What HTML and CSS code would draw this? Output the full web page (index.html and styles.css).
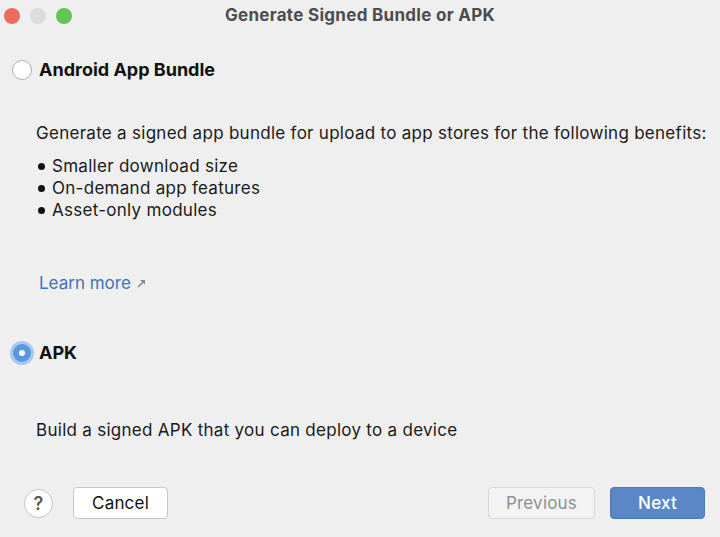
FILE: index.html
```html
<!DOCTYPE html>
<html>
<head>
<meta charset="utf-8">
<link rel="stylesheet" href="styles.css">
</head>
<body>
<div class="window">
  <div class="titlebar">
    <div class="lights">
      <span class="light red"></span>
      <span class="light gray"></span>
      <span class="light green"></span>
    </div>
    <div class="title">Generate Signed Bundle or APK</div>
  </div>
  <div class="content">
    <label class="option first">
      <span class="radio"></span>
      <span class="opt-label">Android App Bundle</span>
    </label>
    <p class="desc">Generate a signed app bundle for upload to app stores for the following benefits:</p>
    <ul class="benefits">
      <li>Smaller download size</li>
      <li>On-demand app features</li>
      <li>Asset-only modules</li>
    </ul>
    <a class="learn">Learn more <svg class="arrow" width="9" height="9" viewBox="0 0 9 9"><path d="M1 8 L6 3" stroke="#8a8a8a" stroke-width="1.6" fill="none"/><path d="M3.2 1 L8 1 L8 5.8 Z" fill="#8a8a8a"/></svg></a>
    <label class="option second">
      <span class="radio checked"></span>
      <span class="opt-label">APK</span>
    </label>
    <p class="desc apk">Build a signed APK that you can deploy to a device</p>
  </div>
  <div class="footer">
    <div class="left">
      <span class="help">?</span>
      <button class="btn">Cancel</button>
    </div>
    <div class="right">
      <button class="btn disabled">Previous</button>
      <button class="btn primary">Next</button>
    </div>
  </div>
</div>
</body>
</html>
```
FILE: styles.css
```css
html, body {
  margin: 0;
  padding: 0;
  background: #efefef;
}
.window {
  width: 720px;
  height: 537px;
  display: flex;
  flex-direction: column;
  font-family: Inter, "Liberation Sans", sans-serif;
  color: #1a1a1a;
  background: #efefef;
}
.titlebar {
  height: 31px;
  display: flex;
  align-items: center;
  position: relative;
}
.lights {
  display: flex;
  gap: 10px;
  padding-left: 4px;
  margin-top: 1px;
}
.light {
  width: 16px;
  height: 16px;
  border-radius: 50%;
  display: block;
}
.red { background: #ec6a5e; }
.gray { background: #dcdcdc; }
.green { background: #61c554; }
.title {
  position: absolute;
  left: 0;
  right: 0;
  text-align: center;
  font-size: 17px;
  letter-spacing: 0.3px;
  font-weight: 700;
  color: #4d4d4d;
  top: 5px;
}
.content {
  flex: 1;
  padding: 0 0 0 12px;
}
.option {
  display: flex;
  align-items: center;
  gap: 7px;
  line-height: 22px;
}
.option.first { margin-top: 28px; }
.option.second { margin-top: 49px; }
.radio {
  width: 20px;
  height: 20px;
  border-radius: 50%;
  background: #fff;
  border: 1px solid #adadad;
  box-sizing: border-box;
  display: block;
}
.radio.checked {
  width: 18px;
  height: 18px;
  margin: 0 1px;
  background: #fff;
  border: 6px solid #5b97dc;
  box-shadow: 0 0 0 3px #a8c8f0;
}
.opt-label {
  font-size: 18px;
  font-weight: 700;
  color: #111;
}
.desc {
  margin: 41px 0 0 24px;
  font-size: 17px;
  letter-spacing: 0.28px;
  line-height: 22px;
}
.desc.apk { margin-top: 55px; }
.benefits {
  list-style: none;
  margin: 11px 0 0 24px;
  padding: 0;
  font-size: 17px;
  letter-spacing: 0.28px;
  line-height: 22px;
}
.benefits li {
  display: flex;
  align-items: center;
}
.benefits li::before {
  content: "";
  width: 7px;
  height: 7px;
  border-radius: 50%;
  background: #111;
  margin: 0 7px 0 2px;
}
.learn {
  display: inline-flex;
  align-items: center;
  margin: 52px 0 0 27px;
  font-size: 17px;
  color: #3d74b6;
}
.arrow {
  margin-left: 6px;
  margin-top: 1px;
}
.footer {
  display: flex;
  justify-content: space-between;
  align-items: center;
  padding: 0 15px 18px 24px;
}
.left, .right {
  display: flex;
  align-items: center;
}
.left { gap: 20px; }
.right { gap: 15px; }
.help {
  width: 29px;
  height: 29px;
  border-radius: 50%;
  border: 1px solid #c4c4c4;
  background: #fff;
  box-sizing: border-box;
  display: flex;
  align-items: center;
  justify-content: center;
  font-size: 18px;
  font-weight: 600;
  color: #5a5a5a;
}
.btn {
  font-family: inherit;
  font-size: 17px;
  letter-spacing: 0.2px;
  height: 32px;
  width: 95px;
  border-radius: 4px;
  border: 1px solid #c8c8c8;
  background: #fff;
  color: #111;
  padding: 0;
}
.btn.disabled {
  width: 107px;
  background: #f3f3f3;
  color: #8f8f8f;
  border-color: #d6d6d6;
}
.btn.primary {
  background: #5a87c5;
  border-color: #4c79b7;
  color: #fff;
  font-weight: 500;
}
```
